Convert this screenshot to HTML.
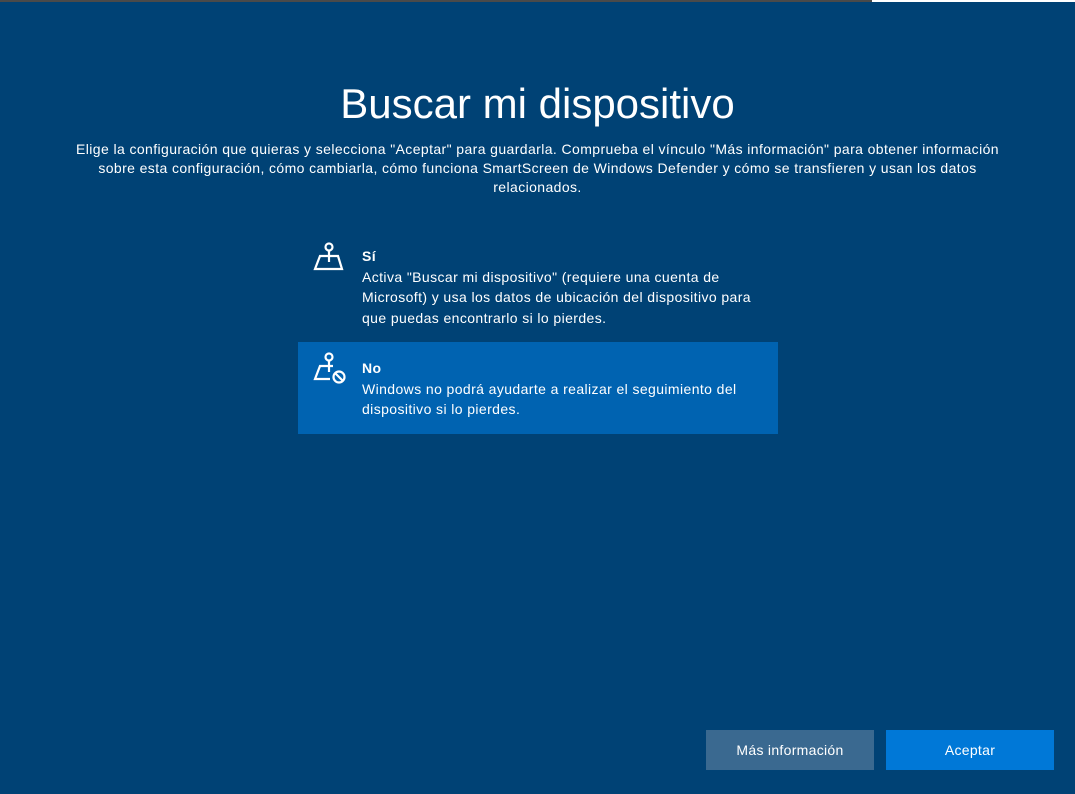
<!DOCTYPE html>
<html><head><meta charset="utf-8"><style>
body{margin:0;width:1075px;height:794px;background:#004275;font-family:"Liberation Sans",sans-serif;color:#fff;position:relative;overflow:hidden}
.bar1{position:absolute;left:0;top:0;width:872px;height:2px;background:#4a4a4a}
.bar2{position:absolute;left:872px;top:0;width:203px;height:2px;background:#fff}
h1{position:absolute;top:80px;left:0;width:1075px;text-align:center;font-weight:normal;font-size:42px;margin:0;letter-spacing:0px}
.desc{position:absolute;top:140px;left:0;width:1075px;text-align:center;font-size:14px;line-height:19px;white-space:nowrap;letter-spacing:0.4px}
.opt{position:absolute;left:298px;width:480px;font-size:14px;line-height:20.5px;letter-spacing:0.4px}
.opt b{display:block}
.opt .t{position:absolute;left:64px;top:0;width:400px;white-space:nowrap}
.opt svg{position:absolute;left:14px}
.btn{position:absolute;top:730px;width:168px;height:40px;line-height:40px;text-align:center;font-size:14px;letter-spacing:0.3px}
</style></head><body>
<div class="bar1"></div><div class="bar2"></div>
<h1>Buscar mi dispositivo</h1>
<div class="desc">Elige la configuración que quieras y selecciona "Aceptar" para guardarla. Comprueba el vínculo "Más información" para obtener información<br>sobre esta configuración, cómo cambiarla, cómo funciona SmartScreen de Windows Defender y cómo se transfieren y usan los datos<br>relacionados.</div>
<div class="opt" style="top:246px;height:90px">
<svg width="34" height="32" viewBox="0 0 34 32" style="top:-4px" fill="none" stroke="#fff" stroke-width="2.2"><circle cx="17" cy="5" r="3.5"/><line x1="17" y1="8.5" x2="17" y2="20"/><polygon points="8,14 26,14 30,27 3,27"/></svg>
<div class="t"><b>Sí</b>Activa "Buscar mi dispositivo" (requiere una cuenta de<br>Microsoft) y usa los datos de ubicación del dispositivo para<br>que puedas encontrarlo si lo pierdes.</div></div>
<div class="opt" style="top:342px;height:92px;background:#0063b1">
<svg width="36" height="34" viewBox="0 0 36 34" style="top:10px" fill="none" stroke="#fff" stroke-width="2.2"><circle cx="17" cy="5" r="3.5"/><line x1="17" y1="8.5" x2="17" y2="20"/><polyline points="21,14 8,14 3,27 18,27"/><circle cx="27" cy="25" r="5.5"/><line x1="23" y1="21" x2="31" y2="29"/></svg>
<div class="t" style="top:16px"><b>No</b>Windows no podrá ayudarte a realizar el seguimiento del<br>dispositivo si lo pierdes.</div></div>
<div class="btn" style="left:706px;background:#3a6990">Más información</div>
<div class="btn" style="left:886px;background:#0078d7">Aceptar</div>
</body></html>
